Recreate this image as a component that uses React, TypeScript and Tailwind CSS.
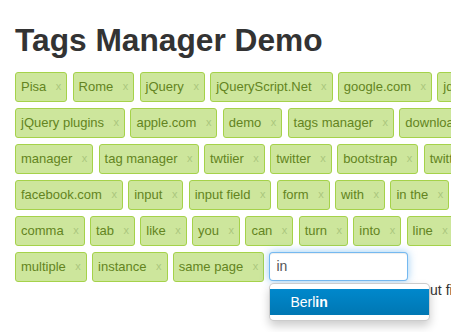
import React from 'react';

const rows: string[][] = [
  ['Pisa', 'Rome', 'jQuery', 'jQueryScript.Net', 'google.com', 'jquery'],
  ['jQuery plugins', 'apple.com', 'demo', 'tags manager', 'download'],
  ['manager', 'tag manager', 'twtiier', 'twitter', 'bootstrap', 'twitter'],
  ['facebook.com', 'input', 'input field', 'form', 'with', 'in the', 'tags'],
  ['comma', 'tab', 'like', 'you', 'can', 'turn', 'into', 'line', 'tags']
];

const lastRow = ['multiple', 'instance', 'same page'];

const Tag: React.FC<{ label: string }> = ({ label }) => (
  <span className="inline-flex items-center shrink-0 h-[30px] pl-[5px] pr-[5px] border border-[#a5d24a] rounded-[3px] bg-[#cde69c] text-[13px] text-[#638421] whitespace-nowrap">
    {label}
    <span className="ml-[9.5px] text-[11px] text-[#abc67e]">x</span>
  </span>
);

export default function App() {
  return (
    <div className="w-[451px] h-[332px] overflow-hidden bg-white font-['Liberation_Sans',Arial,sans-serif] text-[#333]">
      <div className="pl-[15px] pt-[25px]">
        <h1 className="text-[31.7px] font-bold leading-none text-[#333] whitespace-nowrap">
          Tags Manager Demo
        </h1>
        <div className="mt-[15px] flex flex-col gap-[6px]">
          {rows.map((row, i) => (
            <div key={i} className="flex gap-[5.3px]">
              {row.map((t, j) => (
                <Tag key={j} label={t} />
              ))}
            </div>
          ))}
          <div className="flex items-center gap-[5.3px]">
            {lastRow.map((t, j) => (
              <Tag key={j} label={t} />
            ))}
            <div className="relative z-10 shrink-0">
              <div className="w-[139px] h-[29px] pl-[6px] flex items-center border border-[rgba(82,168,236,0.8)] rounded-[4px] bg-white text-[14px] text-[#555] shadow-[inset_0_1px_1px_rgba(0,0,0,0.075),0_0_8px_rgba(82,168,236,0.6)]">
                in
              </div>
              <div className="absolute left-0 top-[31px] w-[161px] py-[5px] bg-white border border-[rgba(0,0,0,0.2)] rounded-[5px] shadow-[0_5px_10px_rgba(0,0,0,0.2)]">
                <div className="h-[26px] pl-[20px] flex items-center text-[14px] text-white bg-gradient-to-b from-[#0088cc] to-[#0077b3]">
                  Berl<span className="font-bold">in</span>
                </div>
              </div>
            </div>
          </div>
        </div>
        <p className="pl-[324px] mt-[1px] text-[14px] leading-[14px] text-[#333] whitespace-nowrap">
          Type in the input field to add tags
        </p>
      </div>
    </div>
  );
}
